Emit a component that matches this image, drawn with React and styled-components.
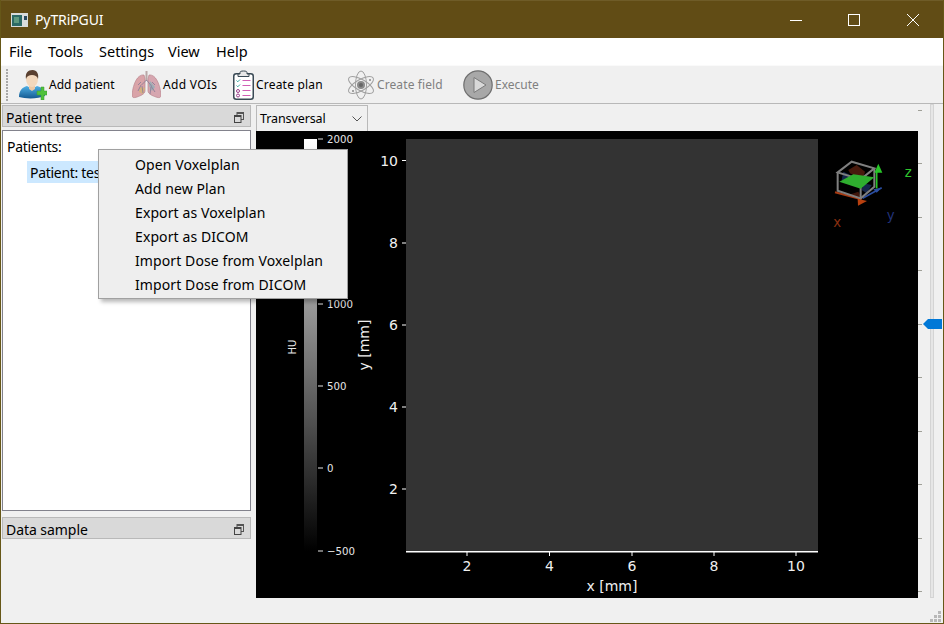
import React from "react";
import styled, { createGlobalStyle } from "styled-components";

const Global = createGlobalStyle`
  html, body { margin: 0; padding: 0; background: #f0f0f0; overflow: hidden; }
  * { box-sizing: border-box; }
`;

const Win = styled.div`
  width: 944px; height: 624px; display: flex; flex-direction: column; position: relative; overflow: hidden;
  background: #f0f0f0; border: 1px solid #665718; border-top: 0;
  font-family: "Noto Sans", "Open Sans", sans-serif; color: #000;
`;
const TitleBar = styled.div`
  height: 38px; flex: none; margin: 0 -1px; background: #614c15; border-top: 1px solid #6f5c28; display: flex; align-items: center; color: #fff; padding: 0 2px 0 11px;
`;
const AppIcon = styled.svg` width: 17px; height: 14px; flex: none; `;
const Title = styled.span` font-size: 14px; margin-left: 7px; flex: 1; letter-spacing: -0.1px; `;
const WinBtn = styled.div` width: ${p => p.$w}px; height: 100%; display: flex; align-items: center; justify-content: center; `;
const MenuBar = styled.div` height: 27px; flex: none; background: #fff; display: flex; align-items: center; font-size: 14.5px; padding: 0 0 2px 8px; `;
const MenuItem = styled.span` width: ${p => p.$w}px; flex: none; `;
const ToolBar = styled.div`
  height: 39px; flex: none; display: flex; align-items: center; padding-left: 5px; background: #f0f0f0;
  border-top: 1px solid #fafafa; border-bottom: 1px solid #b8b8b8;
`;
const Grip = styled.div`
  width: 2px; height: 32px; margin-right: 11px; flex: none;
  background: repeating-linear-gradient(to bottom, #a8a8a8 0 2px, transparent 2px 3px);
`;
const ToolBtn = styled.div`
  width: ${p => p.$w}px; flex: none; display: flex; align-items: center; gap: 2px; font-size: 12px; letter-spacing: ${p => p.$ls ?? 0}px;
  color: ${p => p.$off ? "#808080" : "#000"};
`;
const Body = styled.div` flex: 1; display: flex; min-height: 0; `;
const Left = styled.div` width: 250px; flex: none; padding: 1px 0 0 1px; display: flex; flex-direction: column; `;
const DockHead = styled.div`
  height: 22px; flex: none; background: #d9d9d9; border: 1px solid #b9b9b9; display: flex; align-items: center; justify-content: space-between;
  padding: 2px 6px 0 3px; font-size: 14px; letter-spacing: -0.05px;
`;
const Tree = styled.div`
  height: 381px; flex: none; margin-top: 3px; margin-bottom: 6px; background: #fff; border: 1px solid #82828c; padding: 6px 0 0 4px; font-size: 14px; letter-spacing: -0.3px;
`;
const TreeRow = styled.div` height: 22px; line-height: 20px; `;
const TreeSel = styled.div` height: 22px; line-height: 24px; margin: 2px 0 0 20px; width: 90px; padding-left: 3px; background: #cce8ff; white-space: nowrap; `;
const Center = styled.div` width: 662px; margin-left: 5px; flex: none; display: flex; flex-direction: column; `;
const Combo = styled.div`
  margin-top: 1px; width: 112px; height: 26px; flex: none; background: #f0f0f0; border: 1px solid #b9b9b9; border-bottom: 0; display: flex; align-items: center; justify-content: space-between;
  padding: 0 5px 0 3px; font-size: 12.5px; letter-spacing: -0.1px;
`;
const Plot = styled.svg` display: block; flex: none; background: #000; `;
const SliderCol = styled.div` flex: 1; position: relative; display: flex; padding-bottom: 26px; `;
const Ticks = styled.div` width: 12px; flex: none; padding: 6px 0 0 0; height: 488px; display: flex; flex-direction: column; justify-content: space-between; `;
const Tick = styled.div` width: 4px; height: 1px; background: #a0a098; `;
const Groove = styled.div` width: 4px; height: 494px; background: #e6e6e6; border: 1px solid #d4d4d4; flex: none; `;
const Handle = styled.svg` position: absolute; left: 5px; top: 215px; width: 19px; height: 10px; `;
const SizeGrip = styled.svg` position: absolute; right: 2px; bottom: 1px; width: 11px; height: 11px; `;
const Menu = styled.div`
  position: absolute; left: 97px; top: 149px; width: 250px; height: 150px; background: #eeeeee; border: 1px solid #a0a0a0;
  box-shadow: 3px 3px 4px rgba(0,0,0,.28); padding: 3px 0 0 36px; font-size: 14px; letter-spacing: 0.1px; z-index: 5;
`;
const MenuRow = styled.div` height: 24px; line-height: 24px; white-space: nowrap; `;

const FloatIcon = () => (
  <svg width="10" height="11" viewBox="0 0 10 11">
    <rect x="3" y="0.5" width="6.500" height="7" fill="none" stroke="#555" />
    <rect x="3" y="0" width="7" height="2" fill="#555" />
    <rect x="0.5" y="3.5" width="6.500" height="7" fill="#d9d9d9" stroke="#444" />
    <rect x="0" y="3" width="7" height="2" fill="#444" />
  </svg>
);

const Patient = () => (
  <svg width="28" height="30" viewBox="0 0 28 30">
    <defs>
      <linearGradient id="pb" x1="0" y1="0" x2="0" y2="1"><stop offset="0" stopColor="#4fb0e6" /><stop offset="1" stopColor="#145a92" /></linearGradient>
    </defs>
    <path d="M0 27c0-7 4-10 8-11l5 3 5-3c4 1 7 3 8 10-7 3-19 3-26 1z" fill="url(#pb)" />
    <path d="M10 14h6v5l-3 2-3-2z" fill="#ecc9a8" />
    <ellipse cx="13" cy="9.5" rx="6" ry="7.5" fill="#f3d8bd" />
    <path d="M7 9C6 3 9 0 13.500 0 18 0 20 4 19 9c-1-3-3-4-6-4S8 6 7 9z" fill="#5a4030" />
    <path d="M18 21h4v-4h3v4h3v4h-3v5h-3v-5h-4z" fill="#4fc13c" stroke="#3a9a2c" strokeWidth=".5" />
  </svg>
);
const Lungs = () => (
  <svg width="29" height="29" viewBox="0 0 29 29">
    <path d="M14.500 1v10" stroke="#b9a7a7" strokeWidth="2" />
    <path d="M12 5C6 4 1 13 0 25c0 3 2 3 5 2 3-1 8-3 8-6V9z" fill="#d9a3a8" stroke="#b9848c" strokeWidth=".7" />
    <path d="M17 5c6-1 11 8 12 20 0 3-2 3-5 2-3-1-8-3-8-6V9z" fill="#d6a6b0" stroke="#b9848c" strokeWidth=".7" />
    <path d="M8 17l5 1-2 6-4-2z" fill="#d2b37a" opacity=".9" />
    <path d="M18 11l5 6-3 4-3-5z" fill="#8fb0b8" opacity=".8" />
    <path d="M14.500 10l-5 5m5-5l5 6M9 15l-3 6m4-5l1 7M19 16l4 6m-4-5l-1 7M9 12l-3 3M20 12l3 3" stroke="#8d7f98" strokeWidth=".9" fill="none" />
  </svg>
);
const Clipboard = () => (
  <svg width="21" height="30" viewBox="0 0 21 30">
    <rect x="0.75" y="3.75" width="19.5" height="25.5" rx="2.5" fill="#fff" stroke="#3a4a55" strokeWidth="1.5" />
    <path d="M7 4V2.500C7 1.500 8 1 10.500 1S14 1.500 14 2.500V4h2v2.500H5V4z" fill="#e8e8e8" stroke="#3a4a55" strokeWidth="1" />
    <path d="M3.500 10.500l1.300 1.300L7 9.500M3.500 15.500l1.300 1.300L7 14.500" stroke="#37a7a0" strokeWidth="1" fill="none" />
    <circle cx="5" cy="21" r="1.500" fill="none" stroke="#9a3f8d" />
    <circle cx="5" cy="25.500" r="1.500" fill="none" stroke="#9a3f8d" />
    <path d="M9.500 10.500h8M9.500 15.500h8M9.500 20.500h8M9.500 25.500h8" stroke="#d05fb5" strokeWidth="1.200" />
  </svg>
);
const Atom = () => (
  <svg width="28" height="30" viewBox="0 0 28 30">
    <g fill="none" stroke="#a0a0a0" strokeWidth="1">
      <ellipse cx="14" cy="15" rx="5.500" ry="14" />
      <ellipse cx="14" cy="15" rx="5.500" ry="14" transform="rotate(60 14 15)" />
      <ellipse cx="14" cy="15" rx="5.500" ry="14" transform="rotate(-60 14 15)" />
    </g>
    <circle cx="14" cy="15" r="4" fill="#8a8a8a" />
    <circle cx="14" cy="15" r="2" fill="#666" />
    <circle cx="23" cy="10" r="1" fill="#888" />
    <circle cx="6" cy="21" r="1" fill="#888" />
  </svg>
);
const Play = () => (
  <svg width="30" height="30" viewBox="0 0 30 30">
    <circle cx="15" cy="15" r="14.200" fill="#a8a8a8" stroke="#6f6f6f" strokeWidth="1.200" />
    <path d="M11 7.500L23 15l-12 7.500z" fill="#d8d8d8" stroke="#7a7a7a" strokeWidth="1" />
  </svg>
);

const fontMpl = '"DejaVu Sans", sans-serif';
const xTicks = [[2, 211], [4, 293.5], [6, 376], [8, 458], [10, 540]];
const yTicks = [[2, 358], [4, 276], [6, 194], [8, 112], [10, 29.5]];
const cbTicks = [["2000", 8], ["1000", 173], ["500", 255], ["0", 337], ["−500", 420]];

const Figure = () => (
  <Plot width="662" height="467" viewBox="0 0 662 467">
    <defs>
      <linearGradient id="cb" x1="0" y1="0" x2="0" y2="1">
        <stop offset="0" stopColor="#fff" /><stop offset="1" stopColor="#000" />
      </linearGradient>
    </defs>
    <rect x="48" y="8" width="13" height="412" fill="url(#cb)" />
    {cbTicks.map(([t, y]) => (
      <g key={t}>
        <rect x="62" y={y - .5} width="5" height="1" fill="#e6e6e6" />
        <text x="71" y={y + 4} fontFamily={fontMpl} fontSize="10.200" fill="#e6e6e6">{t}</text>
      </g>
    ))}
    <text transform="translate(40 216) rotate(-90)" textAnchor="middle" fontFamily={fontMpl} fontSize="10" fill="#e6e6e6">HU</text>
    <rect x="150" y="8" width="412" height="412" fill="#333" />
    <rect x="150" y="420" width="412" height="1.500" fill="#fff" />
    {xTicks.map(([t, x]) => (
      <g key={t}>
        <rect x={x - .5} y="420" width="1" height="5" fill="#fff" />
        <text x={x} y="440" textAnchor="middle" fontFamily={fontMpl} fontSize="14" fill="#f0f0f0">{t}</text>
      </g>
    ))}
    {yTicks.map(([t, y]) => (
      <g key={t}>
        <rect x="146" y={y - .5} width="4" height="1" fill="#fff" />
        <text x="142" y={y + 5} textAnchor="end" fontFamily={fontMpl} fontSize="14" fill="#f0f0f0">{t}</text>
      </g>
    ))}
    <text x="356" y="460" textAnchor="middle" fontFamily={fontMpl} fontSize="14" fill="#f0f0f0">x [mm]</text>
    <text transform="translate(113 214) rotate(-90)" textAnchor="middle" fontFamily={fontMpl} fontSize="14" fill="#f0f0f0">y [mm]</text>
    <svg x="564" y="9" width="98" height="100" viewBox="0 0 294 300">
      <path d="M85 90L110 75 135 95 128 118 90 100z" fill="#5a2010" opacity=".8" />
      <path d="M85 165l30-10 10 20z" fill="#5a2010" opacity=".7" />
      <path d="M70 95l20 10-5 20-20-5z" fill="#15264a" />
      <path d="M130 130l25 5-15 25-15-10z" fill="#15264a" />
      <path d="M45 157L125 178" stroke="#a83a12" strokeWidth="6" />
      <path d="M113 176l28 7-27 14z" fill="#b8400f" />
      <path d="M128 175L185 143" stroke="#2a4da0" strokeWidth="5" />
      <path d="M160 148l25-5-15 15z" fill="#2a4da0" />
      <g fill="none" stroke="#7f7f7f" strokeWidth="6">
        <path d="M53 97L95 65 163 85 122 118z" />
        <path d="M53 97V152L122 175 163 140V85" />
        <path d="M122 118V175" />
      </g>
      <path d="M58 125L100 103 163 112 122 146z" fill="#2fae2f" />
      <path d="M170 145V95" stroke="#28c528" strokeWidth="5" />
      <path d="M163 98h24l-12-27z" fill="#28c528" />
      <text x="40" y="260" fontFamily={fontMpl} fontSize="40" fill="#8a2f10">x</text>
      <text x="200" y="240" fontFamily={fontMpl} fontSize="40" fill="#22337a">y</text>
      <text x="254" y="112" fontFamily={fontMpl} fontSize="40" fill="#2fc52f">z</text>
    </svg>
  </Plot>
);

export default function App() {
  return (
    <Win>
      <Global />
      <TitleBar>
        <AppIcon viewBox="0 0 17 14">
          <rect width="17" height="14" fill="#d8dcdc" />
          <rect x="1" y="2" width="10" height="11" fill="#2c6a66" />
          <rect x="3" y="4" width="5" height="6" fill="#5f9a80" />
          <rect x="13" y="3" width="3" height="4" fill="#2a4a60" />
        </AppIcon>
        <Title>PyTRiPGUI</Title>
        <WinBtn $w={56}><svg width="12" height="12" viewBox="0 0 12 12"><path d="M0 6.500h12" stroke="#fff" /></svg></WinBtn>
        <WinBtn $w={60}><svg width="12" height="12" viewBox="0 0 12 12"><rect x=".5" y=".5" width="11" height="11" fill="none" stroke="#fff" /></svg></WinBtn>
        <WinBtn $w={58}><svg width="12" height="12" viewBox="0 0 12 12"><path d="M0 0l12 12M12 0L0 12" stroke="#fff" /></svg></WinBtn>
      </TitleBar>
      <MenuBar>
        <MenuItem $w={39}>File</MenuItem>
        <MenuItem $w={51}>Tools</MenuItem>
        <MenuItem $w={69}>Settings</MenuItem>
        <MenuItem $w={48}>View</MenuItem>
        <MenuItem $w={40}>Help</MenuItem>
      </MenuBar>
      <ToolBar>
        <Grip />
        <ToolBtn $w={113}><Patient />Add patient</ToolBtn>
        <ToolBtn $w={101} $ls={0.3}><Lungs />Add VOIs</ToolBtn>
        <ToolBtn $w={114} $ls={0.2}><Clipboard />Create plan</ToolBtn>
        <ToolBtn $w={116} $ls={0.1} $off><Atom />Create field</ToolBtn>
        <ToolBtn $w={90} $off><Play />Execute</ToolBtn>
      </ToolBar>
      <Body>
        <Left>
          <DockHead>Patient tree<FloatIcon /></DockHead>
          <Tree>
            <TreeRow>Patients:</TreeRow>
            <TreeSel>Patient: test</TreeSel>
          </Tree>
          <DockHead>Data sample<FloatIcon /></DockHead>
        </Left>
        <Center>
          <Combo>Transversal
            <svg width="10" height="6" viewBox="0 0 10 6"><path d="M.5.500L5 5 9.500.500" fill="none" stroke="#555" /></svg>
          </Combo>
          <Figure />
        </Center>
        <SliderCol>
          <Ticks>{Array.from({ length: 10 }, (_, i) => <Tick key={i} />)}</Ticks>
          <Groove />
          <Handle viewBox="0 0 19 10"><path d="M0 5L3 2 5 0h14v10H5L3 8z" fill="#0078d7" /></Handle>
        </SliderCol>
      </Body>
      <Menu>
        <MenuRow>Open Voxelplan</MenuRow>
        <MenuRow>Add new Plan</MenuRow>
        <MenuRow>Export as Voxelplan</MenuRow>
        <MenuRow>Export as DICOM</MenuRow>
        <MenuRow>Import Dose from Voxelplan</MenuRow>
        <MenuRow>Import Dose from DICOM</MenuRow>
      </Menu>
      <SizeGrip viewBox="0 0 11 11">
        <g fill="#b8b8b8"><rect x="8" y="0" width="3" height="3" /><rect x="4" y="4" width="3" height="3" /><rect x="8" y="4" width="3" height="3" /><rect x="0" y="8" width="3" height="3" /><rect x="4" y="8" width="3" height="3" /><rect x="8" y="8" width="3" height="3" /></g>
      </SizeGrip>
    </Win>
  );
}
